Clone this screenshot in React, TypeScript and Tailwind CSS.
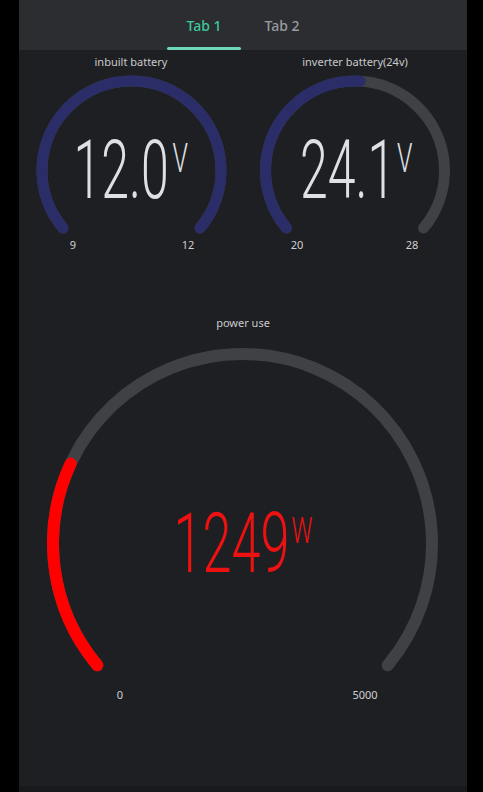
import React from 'react'

const BLUE = '#2b2d68'
const TRACK = '#404145'

// SVG angle: 0 = right, clockwise positive
function polar(cx: number, cy: number, r: number, deg: number) {
  const a = (deg * Math.PI) / 180
  return [cx + r * Math.cos(a), cy + r * Math.sin(a)]
}

function arc(cx: number, cy: number, r: number, a0: number, a1: number) {
  const [x0, y0] = polar(cx, cy, r, a0)
  const [x1, y1] = polar(cx, cy, r, a1)
  const large = a1 - a0 > 180 ? 1 : 0
  return `M ${x0} ${y0} A ${r} ${r} 0 ${large} 1 ${x1} ${y1}`
}

type GaugeProps = {
  width: number
  height: number
  cx: number
  cy: number
  r: number
  stroke: number
  min: number
  max: number
  value: number
  color: string
  text: string
  unit: string
  textColor: string
  squeeze: number
  numX: number
  numSize: number
  numBase: number
  unitX: number
  unitSize: number
  unitBase: number
  labelDx: [number, number]
  labelBase: number
}

const numFont = { fontFamily: 'Roboto, "Liberation Sans", sans-serif' }
const smallFont = { fontFamily: '"Noto Sans", "Open Sans", sans-serif' }

function Gauge(p: GaugeProps) {
  const start = 140
  const sweep = 260
  const frac = Math.max(0, Math.min(1, (p.value - p.min) / (p.max - p.min)))
  return (
    <svg width={p.width} height={p.height} className="block">
      <path d={arc(p.cx, p.cy, p.r, start, start + sweep)} fill="none" stroke={TRACK} strokeWidth={p.stroke} strokeLinecap="round" />
      <path d={arc(p.cx, p.cy, p.r, start, start + sweep * frac)} fill="none" stroke={p.color} strokeWidth={p.stroke} strokeLinecap="round" />
      <text
        transform={`translate(${p.cx + p.numX} ${p.cy + p.numBase}) scale(${p.squeeze} 1)`}
        fontSize={p.numSize}
        fontWeight={300}
        fill={p.textColor}
        style={numFont}
      >
        {p.text}
      </text>
      <text
        transform={`translate(${p.cx + p.unitX} ${p.cy + p.unitBase}) scale(${p.squeeze} 1)`}
        fontSize={p.unitSize}
        fontWeight={300}
        fill={p.textColor}
        style={numFont}
      >
        {p.unit}
      </text>
      <text x={p.cx + p.labelDx[0]} y={p.cy + p.labelBase} fontSize={11} fill="#cfcfd2" textAnchor="middle" style={smallFont}>
        {p.min}
      </text>
      <text x={p.cx + p.labelDx[1]} y={p.cy + p.labelBase} fontSize={11} fill="#cfcfd2" textAnchor="middle" style={smallFont}>
        {p.max}
      </text>
    </svg>
  )
}

export default function App() {
  return (
    <div className="flex h-screen bg-black font-['Noto_Sans','Open_Sans',sans-serif]">
      <div className="ml-[19px] flex w-[448px] flex-col bg-[#1e1f22]">
        {/* Tabs */}
        <div className="flex h-[50px] justify-center bg-[#2c2d31]">
          <div className="relative flex w-[78px] items-center justify-center">
            <span className="text-[14px] font-medium text-[#3ec79b]">Tab 1</span>
            <div className="absolute bottom-0 left-[2px] right-[2px] h-[3px] rounded-full bg-[#6fd6b6]" />
          </div>
          <div className="flex w-[78px] items-center justify-center">
            <span className="text-[14px] font-medium text-[#9a9ba0]">Tab 2</span>
          </div>
        </div>

        {/* Battery gauges */}
        <div className="grid grid-cols-2">
          <div className="flex flex-col items-center">
            <div className="pt-[5px] text-[11px] leading-[14px] text-[#c9c9cc]">inbuilt battery</div>
            <Gauge
              width={224} height={186} cx={112.5} cy={101.5} r={89.5} stroke={11}
              min={9} max={12} value={12} color={BLUE}
              text="12.0" unit="V" textColor="#dfe0e3" squeeze={0.61}
              numX={-58} numSize={82} numBase={27.5}
              unitX={41} unitSize={41} unitBase={1.5}
              labelDx={[-58.5, 56.5]} labelBase={78.5}
            />
          </div>
          <div className="flex flex-col items-center">
            <div className="pt-[5px] text-[11px] leading-[14px] text-[#c9c9cc]">inverter battery(24v)</div>
            <Gauge
              width={224} height={186} cx={112} cy={101.5} r={89.5} stroke={11}
              min={20} max={28} value={24.1} color={BLUE}
              text="24.1" unit="V" textColor="#dfe0e3" squeeze={0.61}
              numX={-55} numSize={82} numBase={27.5}
              unitX={42} unitSize={41} unitBase={1.5}
              labelDx={[-58, 57]} labelBase={78.5}
            />
          </div>
        </div>

        {/* Power gauge */}
        <div className="mt-[61px] flex flex-col items-center">
          <div className="text-[11px] leading-[14px] text-[#c9c9cc]">power use</div>
          <Gauge
            width={448} height={376} cx={223.5} cy={213.5} r={189.5} stroke={12}
            min={0} max={5000} value={1249} color="#ff0000"
            text="1249" unit="W" textColor="#ee1111" squeeze={0.63}
            numX={-69} numSize={83} numBase={28.5}
            unitX={49} unitSize={37} unitBase={-0.5}
            labelDx={[-122.5, 122.5]} labelBase={155.5}
          />
        </div>

        <div className="flex-1" />
        <div className="h-[6px] bg-[#18191c]" />
      </div>
    </div>
  )
}
